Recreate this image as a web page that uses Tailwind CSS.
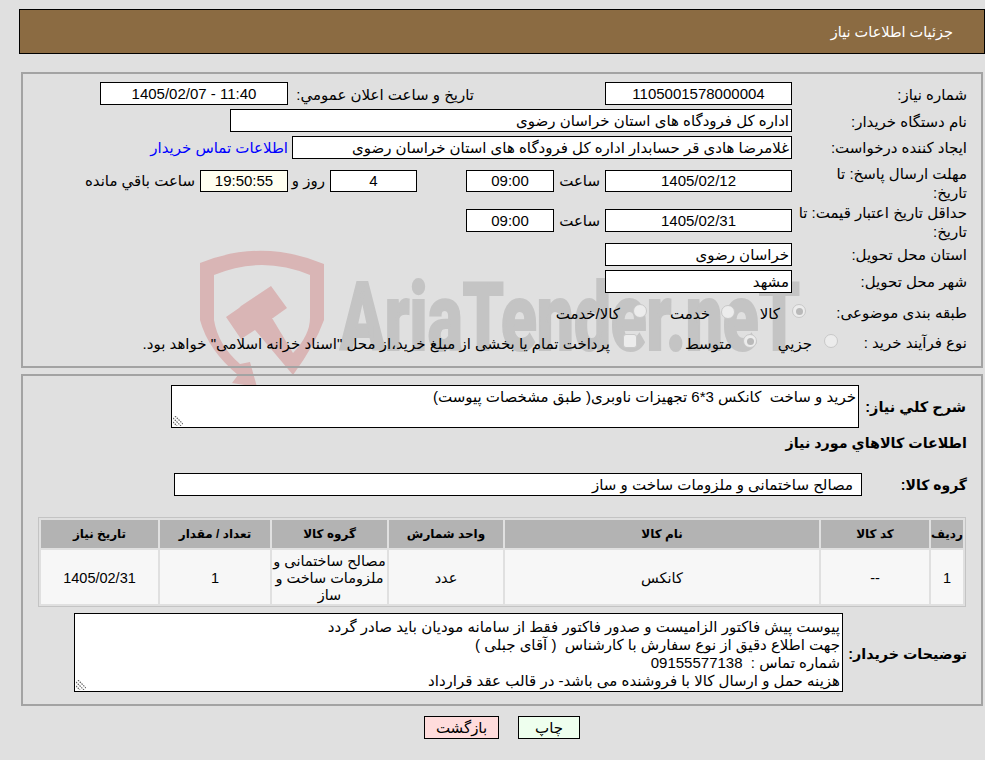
<!DOCTYPE html>
<html lang="fa" dir="rtl">
<head>
  <meta charset="UTF-8" />
  <title>جزئیات اطلاعات نیاز</title>
  <script src="https://cdn.jsdelivr.net/npm/@tailwindcss/browser@4"></script>
</head>
<body class="relative w-[985px] h-[760px] overflow-hidden pt-[9px] bg-[#e0e0e0] text-black text-[15px] leading-[18px] font-['Liberation_Sans','DejaVu_Sans',sans-serif]">

  <!-- watermark -->
  <svg class="absolute left-0 top-0 w-[985px] h-[760px]" viewBox="0 0 985 760">
    <path fill="#d9b5b5" d="M200 263Q262 238 324 264V320Q315 345 293 375L255 330 241 339 226 317 239 308 241 306 256 296 271 286 287 308 273 318 272 318 293 353Q310 335 310 318V275Q262 255 214 275V320Q218 345 240 364L250 362 257 387 232 383 238 375Q208 350 200 320Z"/>
    <text x="340" y="350" textLength="460" lengthAdjust="spacingAndGlyphs" fill="#c4c4c4" stroke="#c4c4c4" stroke-width="2" font-family="Roboto" font-weight="900" font-size="95" class="[direction:ltr] [unicode-bidi:bidi-override]">AriaTender.neT</text>
  </svg>

  <!-- header -->
  <div class="relative ml-auto mr-0 w-[966px] h-[45px] pr-[31px] flex items-center bg-[#8b6b42] border border-black text-white text-[14.5px]">جزئیات اطلاعات نیاز</div>

  <!-- top panel -->
  <div class="relative ml-[21px] mr-[2px] mt-[18px] h-[296px] pt-[8px] pr-[14px] border-2 border-[#a3a3a3]">
    <div class="flex items-center h-[23px]">
      <span class="w-[175px] pt-[3px]">شماره نیاز:</span>
      <span class="w-[187px] h-[23px] flex items-center justify-center bg-white border border-black">1105001578000004</span>
      <span class="w-[317px] pr-[131px] pt-[3px] whitespace-nowrap">تاریخ و ساعت اعلان عمومي:</span>
      <span class="w-[188px] h-[23px] flex items-center justify-center bg-white border border-black">11:40 - 1405/02/07</span>
    </div>
    <div class="flex items-center h-[23px] mt-[4px]">
      <span class="w-[175px] pt-[3px]">نام دستگاه خریدار:</span>
      <span class="w-[562px] h-[23px] flex items-center pr-[2px] bg-white border border-black">اداره کل فرودگاه های استان خراسان رضوی</span>
    </div>
    <div class="flex items-center h-[23px] mt-[4px]">
      <span class="w-[175px] pt-[1px]">ایجاد کننده درخواست:</span>
      <span class="w-[500px] h-[23px] flex items-center pr-[2px] bg-white border border-black">غلامرضا هادی قر حسابدار اداره کل فرودگاه های استان خراسان رضوی</span>
      <a href="#" class="mr-[4px] text-[#0000ff]">اطلاعات تماس خریدار</a>
    </div>
    <div class="flex items-center h-[22px] mt-[11px]">
      <span class="w-[175px] self-start -mt-[6px] leading-[19px] whitespace-nowrap">مهلت ارسال پاسخ: تا<br />تاریخ:</span>
      <span class="w-[187px] h-[22px] flex items-center justify-center bg-white border border-black">1405/02/12</span>
      <span class="w-[51px] pr-[5px]">ساعت</span>
      <span class="w-[88px] h-[22px] flex items-center justify-center bg-white border border-black">09:00</span>
      <span class="w-[49px]"></span>
      <span class="w-[87px] h-[22px] flex items-center justify-center bg-white border border-black">4</span>
      <span class="w-[42px] pr-[5px]">روز و</span>
      <span class="w-[88px] h-[22px] flex items-center justify-center bg-[#fffff0] border border-black">19:50:55</span>
      <span class="mr-[5px]">ساعت باقي مانده</span>
    </div>
    <div class="flex items-center h-[23px] mt-[17px]">
      <span class="w-[175px] self-start -mt-[6px] leading-[19px] whitespace-nowrap">حداقل تاریخ اعتبار قیمت: تا<br />تاریخ:</span>
      <span class="w-[187px] h-[23px] flex items-center justify-center bg-white border border-black">1405/02/31</span>
      <span class="w-[51px] pr-[5px]">ساعت</span>
      <span class="w-[88px] h-[23px] flex items-center justify-center bg-white border border-black">09:00</span>
    </div>
    <div class="flex items-center h-[23px] mt-[11px]">
      <span class="w-[175px] pt-[1px]">استان محل تحویل:</span>
      <span class="w-[187px] h-[23px] flex items-center pr-[2px] bg-white border border-black">خراسان رضوی</span>
    </div>
    <div class="flex items-center h-[23px] mt-[4px]">
      <span class="w-[175px] pt-[1px]">شهر محل تحویل:</span>
      <span class="w-[187px] h-[23px] flex items-center pr-[2px] bg-white border border-black">مشهد</span>
    </div>
    <div class="flex items-center h-[24px] mt-[8px]">
      <span class="w-[161px]">طبقه بندی موضوعی:</span>
      <span class="size-[14px] -mt-[4px] flex items-center justify-center rounded-full bg-[#ececec] border border-[#c8c8c8]"><span class="size-[7px] rounded-full bg-[#b9b9b9]"></span></span>
      <span class="w-[57px] pr-[12px] pt-[2px]">کالا</span>
      <span class="size-[14px] -mt-[3px] rounded-full bg-[#ececec] border border-[#c8c8c8]"></span>
      <span class="w-[74px] pr-[11px] pt-[2px]">خدمت</span>
      <span class="size-[14px] -mt-[4px] rounded-full bg-[#ececec] border border-[#c8c8c8]"></span>
      <span class="pr-[13px] pt-[2px]">کالا/خدمت</span>
    </div>
    <div class="flex items-center h-[24px] mt-[6px]">
      <span class="w-[129px]">نوع فرآیند خرید :</span>
      <span class="size-[14px] -mt-[4px] rounded-full bg-[#ececec] border border-[#c8c8c8]"></span>
      <span class="w-[67px] pr-[12px] pt-[2px]">جزيي</span>
      <span class="size-[14px] -mt-[4px] flex items-center justify-center rounded-full bg-[#ececec] border border-[#c8c8c8]"><span class="size-[7px] rounded-full bg-[#b9b9b9]"></span></span>
      <span class="w-[106px] pr-[11px] pt-[2px]">متوسط</span>
      <span class="size-[14px] -mt-[4px] rounded-[3px] bg-[#ececec] border border-[#c8c8c8]"></span>
      <span class="pr-[13px] pt-[2px] whitespace-nowrap">پرداخت تمام یا بخشی از مبلغ خرید،از محل "اسناد خزانه اسلامی" خواهد بود.</span>
    </div>
  </div>

  <!-- second panel -->
  <div class="relative ml-[21px] mr-[2px] mt-[6px] h-[332px] pt-[9px] pr-[14px] border-2 border-[#a3a3a3]">
    <div class="flex items-center h-[43px]">
      <b class="w-[108px] pr-[1px] pt-[1px] text-[14.5px] whitespace-nowrap">شرح کلي نیاز:</b>
      <div class="relative">
        <textarea readonly rows="2" class="block resize-none w-[688px] h-[43px] px-[2px] py-[2px] bg-white border border-black text-[15px] leading-[18px] overflow-hidden">خرید و ساخت  کانکس 3*6 تجهیزات ناوبری( طبق مشخصات پیوست)</textarea>
        <svg class="absolute left-[2px] bottom-[2px] size-[10px]" viewBox="0 0 10 10" fill="none" stroke="#666" stroke-width="1.2" stroke-dasharray="1.5 1"><path d="M0 2 8 10M2 0 10 8M0 6 4 10"/></svg>
      </div>
    </div>
    <div class="h-[20px] mt-[5px] flex items-center"><b class="text-[14.3px]">اطلاعات کالاهاي مورد نياز</b></div>
    <div class="flex items-center h-[23px] mt-[20px]">
      <b class="w-[105px] text-[14px]">گروه کالا:</b>
      <span class="w-[688px] h-[23px] flex items-center pr-[8px] bg-white border border-black">مصالح ساختمانی و ملزومات ساخت و ساز</span>
    </div>

    <table class="w-[928px] mt-[21px] mr-[1px] table-fixed border-separate border-spacing-[2px] border border-[#c4c4c4] text-[14.5px] leading-[17px] text-center">
      <thead>
        <tr class="h-[28px] bg-[#b3b3b3] text-[12px]">
          <th class="w-[32px] pt-[1px] font-bold">رديف</th>
          <th class="w-[108px] pt-[1px] font-bold">کد کالا</th>
          <th class="w-[314px] pt-[1px] font-bold">نام کالا</th>
          <th class="w-[114px] pt-[1px] font-bold">واحد شمارش</th>
          <th class="w-[115px] pt-[1px] font-bold">گروه کالا</th>
          <th class="w-[110px] pt-[1px] font-bold">تعداد / مقدار</th>
          <th class="pt-[1px] font-bold">تاریخ نیاز</th>
        </tr>
      </thead>
      <tbody>
        <tr class="h-[54px] bg-[#f7f7f7]">
          <td class="pt-[3px]">1</td>
          <td class="pt-[3px]">--</td>
          <td class="pt-[3px]">کانکس</td>
          <td class="pt-[3px]">عدد</td>
          <td class="pt-[3px]">مصالح ساختمانی و ملزومات ساخت و ساز</td>
          <td class="pt-[3px]">1</td>
          <td class="pt-[3px]">1405/02/31</td>
        </tr>
      </tbody>
    </table>

    <div class="flex items-center h-[79px] mt-[6px]">
      <b class="w-[124px] pt-[2px] text-[14.3px] whitespace-nowrap">توضیحات خریدار:</b>
      <div class="relative">
        <textarea readonly class="block resize-none w-[769px] h-[79px] px-[2px] py-[4px] bg-white border border-black text-[15px] leading-[18px] overflow-hidden">پیوست پیش فاکتور الزامیست و صدور فاکتور فقط از سامانه مودیان باید صادر گردد
جهت اطلاع دقیق از نوع سفارش با کارشناس  ( آقای جبلی )
شماره تماس :  09155577138
هزینه حمل و ارسال کالا با فروشنده می باشد- در قالب عقد قرارداد</textarea>
        <svg class="absolute left-[2px] bottom-[2px] size-[10px]" viewBox="0 0 10 10" fill="none" stroke="#666" stroke-width="1.2" stroke-dasharray="1.5 1"><path d="M0 2 8 10M2 0 10 8M0 6 4 10"/></svg>
      </div>
    </div>
  </div>

  <!-- buttons -->
  <div class="relative flex gap-[19px] mt-[10px] mr-[405px]">
    <button class="w-[62px] h-[23px] bg-[#eeffee] border border-black">چاپ</button>
    <button class="w-[75px] h-[23px] bg-[#ffdcdc] border border-black">بازگشت</button>
  </div>

</body>
</html>
